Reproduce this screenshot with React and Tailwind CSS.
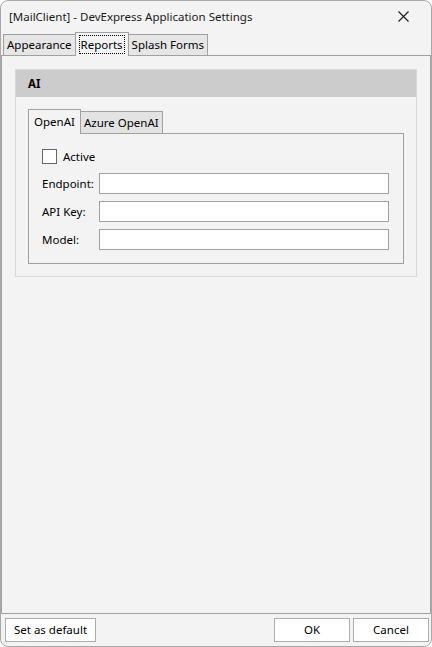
import { useState } from 'react'

const tabBase = 'flex items-center px-[3px] border border-[#a0a0a0] border-b-0'

function MainTabs({ active, onSelect }) {
  const tabs = ['Appearance', 'Reports', 'Splash Forms']
  return (
    <div className="h-[23px] flex items-end pl-[2px]">
      {tabs.map(t =>
        t === active ? (
          <div key={t} className={`${tabBase} h-[24px] -mb-px relative z-10 bg-[#f3f3f3] -mx-px`}>
            <span className="border border-dotted border-black px-px leading-[17px]">{t}</span>
          </div>
        ) : (
          <button key={t} onClick={() => onSelect(t)} className={`${tabBase} h-[21px] bg-[#e6e6e6]`}>
            {t}
          </button>
        )
      )}
    </div>
  )
}

function Field({ label }) {
  return (
    <div className="flex items-center">
      <span className="w-[57px]">{label}</span>
      <div className="flex-1 h-[21px] bg-white border border-[#a0a0a0]" />
    </div>
  )
}

function AIGroup() {
  const [provider, setProvider] = useState('OpenAI')
  const [activeChk, setActiveChk] = useState(false)

  return (
    <div className="border border-[#d9d9d9]">
      <div className="h-[27px] bg-[#cccccc] flex items-center pl-[12px] font-bold">AI</div>
      <div className="px-[12px] pt-[12px] pb-[12px]">
        <div className="h-[24px] flex items-end">
          {['OpenAI', 'Azure OpenAI'].map(p =>
            p === provider ? (
              <div key={p} className={`${tabBase} px-[5px] h-[25px] -mb-px relative z-10 bg-[#f3f3f3]`}>{p}</div>
            ) : (
              <button key={p} onClick={() => setProvider(p)} className={`${tabBase} h-[22px] bg-[#e3e3e3] border-l-0`}>{p}</button>
            )
          )}
        </div>
        <div className="border border-[#a0a0a0] pl-[13px] pr-[14px] pt-[15px] pb-[13px]">
          <label className="flex items-center gap-[6px] h-[15px]">
            <span
              onClick={() => setActiveChk(!activeChk)}
              className="w-[15px] h-[15px] bg-white border border-[#666666] flex items-center justify-center text-[11px] leading-none"
            >
              {activeChk ? '✓' : ''}
            </span>
            Active
          </label>
          <div className="mt-[9px] flex flex-col gap-[7px]">
            <Field label="Endpoint:" />
            <Field label="API Key:" />
            <Field label="Model:" />
          </div>
        </div>
      </div>
    </div>
  )
}

export default function App() {
  const [tab, setTab] = useState('Reports')

  return (
    <div className="w-[432px] h-[647px] bg-[#f3f3f3] border border-[#a8a8a8] rounded-lg overflow-hidden flex flex-col font-['Noto_Sans',sans-serif] text-[11.5px] text-black">
      {/* title bar */}
      <div className="h-[31px] shrink-0 flex items-center justify-between pl-[8px] pr-[22px]">
        <span className="text-[#1a1a1a]">[MailClient] - DevExpress Application Settings</span>
        <svg width="11" height="11" viewBox="0 0 11 11" className="text-[#1a1a1a]">
          <path d="M0.5 0.5 L10.5 10.5 M10.5 0.5 L0.5 10.5" stroke="currentColor" strokeWidth="1.1" />
        </svg>
      </div>

      <MainTabs active={tab} onSelect={setTab} />

      <div className="flex-1 border border-[#a0a0a0] p-[13px]">
        <AIGroup />
      </div>

      {/* footer buttons */}
      <div className="h-[32px] shrink-0 flex items-start pt-[4px] pl-[4px] pr-[2px]">
        <button className="w-[91px] h-[24px] bg-white border border-[#adadad]">Set as default</button>
        <div className="flex-1" />
        <button className="w-[76px] h-[24px] bg-white border border-[#adadad]">OK</button>
        <button className="ml-[3px] w-[76px] h-[24px] bg-white border border-[#adadad]">Cancel</button>
      </div>
    </div>
  )
}
